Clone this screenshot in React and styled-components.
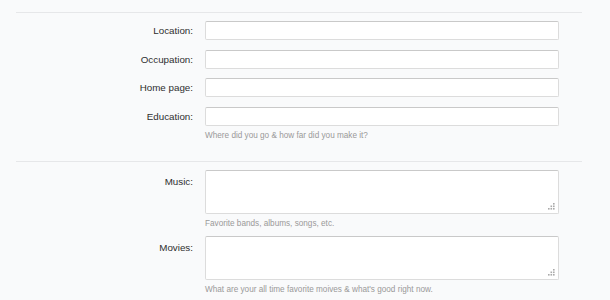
import React from 'react';
import styled, { createGlobalStyle } from 'styled-components';

const GlobalStyle = createGlobalStyle`
  html, body {
    margin: 0;
    padding: 0;
    background: #f9fafb;
  }
  body {
    font-family: "Liberation Sans", Arial, sans-serif;
    color: #333;
  }
`;

const Page = styled.div`
  padding: 12px 28px 0 16px;
`;

const Section = styled.div`
  border-top: 1px solid #e6e7e9;
  padding: 8px 23px 20px 0;
`;

const Row = styled.div`
  display: grid;
  grid-template-columns: 177px 1fr;
  column-gap: 12px;
  margin-bottom: ${(p) => (p.$tight ? '7px' : '9.7px')};

  &:last-child {
    margin-bottom: 0;
  }
`;

const Label = styled.label`
  text-align: right;
  font-size: 9.8px;
  line-height: 19px;
  color: #2e2e2e;
  padding-top: ${(p) => (p.$multi ? '2px' : '0')};
`;

const Field = styled.div`
  display: flex;
  flex-direction: column;
`;

const TextInput = styled.input`
  box-sizing: border-box;
  height: 19px;
  width: 100%;
  margin: 0;
  border: 1px solid #dcdcdc;
  border-top-color: #c9c9c9;
  border-radius: 2px;
  background: #fff;
  outline: none;
`;

const AreaWrap = styled.div`
  position: relative;
`;

const TextArea = styled.textarea`
  display: block;
  box-sizing: border-box;
  height: 44px;
  width: 100%;
  margin: 0;
  border: 1px solid #dcdcdc;
  border-top-color: #c9c9c9;
  border-radius: 2px;
  background: #fff;
  resize: none;
  outline: none;
`;

const Grip = styled.svg`
  position: absolute;
  right: 4px;
  bottom: 4px;
  width: 7px;
  height: 7px;
`;

const Hint = styled.div`
  font-size: 8.2px;
  line-height: 10px;
  color: #999;
  margin-top: 5px;
`;

function ResizeGrip() {
  const dots = [
    [5, 0],
    [2.5, 2.5],
    [5, 2.5],
    [0, 5],
    [2.5, 5],
    [5, 5],
  ];
  return (
    <Grip viewBox="0 0 7 7">
      {dots.map(([x, y], i) => (
        <rect key={i} x={x} y={y} width="1.6" height="1.6" fill="#a9a9a9" />
      ))}
    </Grip>
  );
}

function InputRow({ label, hint }) {
  return (
    <Row>
      <Label>{label}</Label>
      <Field>
        <TextInput type="text" />
        {hint && <Hint>{hint}</Hint>}
      </Field>
    </Row>
  );
}

function AreaRow({ label, hint }) {
  return (
    <Row $tight>
      <Label $multi>{label}</Label>
      <Field>
        <AreaWrap>
          <TextArea />
          <ResizeGrip />
        </AreaWrap>
        {hint && <Hint>{hint}</Hint>}
      </Field>
    </Row>
  );
}

export default function App() {
  return (
    <>
      <GlobalStyle />
      <Page>
        <Section>
          <InputRow label="Location:" />
          <InputRow label="Occupation:" />
          <InputRow label="Home page:" />
          <InputRow label="Education:" hint="Where did you go & how far did you make it?" />
        </Section>
        <Section>
          <AreaRow label="Music:" hint="Favorite bands, albums, songs, etc." />
          <AreaRow
            label="Movies:"
            hint="What are your all time favorite moives & what's good right now."
          />
        </Section>
      </Page>
    </>
  );
}
